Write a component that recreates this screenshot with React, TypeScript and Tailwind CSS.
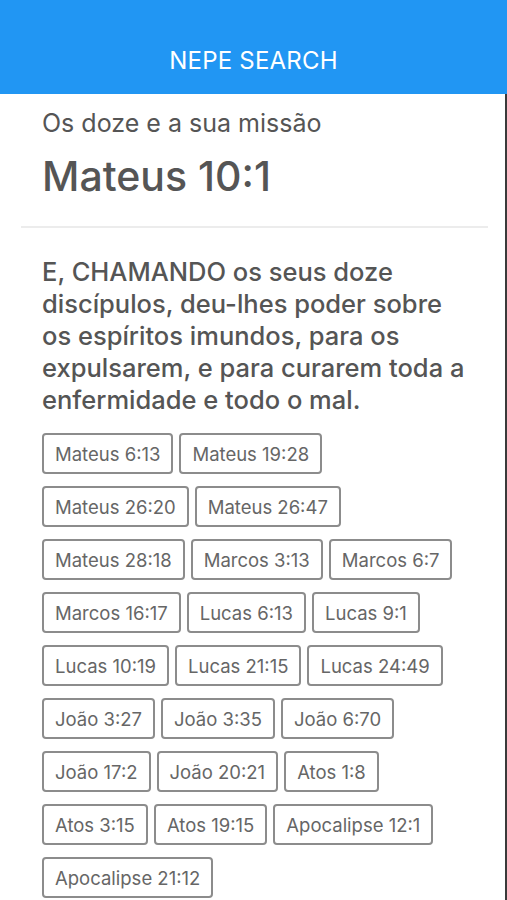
import React from "react";

const refs = [
  "Mateus 6:13",
  "Mateus 19:28",
  "Mateus 26:20",
  "Mateus 26:47",
  "Mateus 28:18",
  "Marcos 3:13",
  "Marcos 6:7",
  "Marcos 16:17",
  "Lucas 6:13",
  "Lucas 9:1",
  "Lucas 10:19",
  "Lucas 21:15",
  "Lucas 24:49",
  "João 3:27",
  "João 3:35",
  "João 6:70",
  "João 17:2",
  "João 20:21",
  "Atos 1:8",
  "Atos 3:15",
  "Atos 19:15",
  "Apocalipse 12:1",
  "Apocalipse 21:12",
];

export default function App() {
  return (
    <div className="w-[507px] h-[900px] overflow-hidden bg-white flex flex-col" style={{ fontFamily: "Inter, 'Liberation Sans', sans-serif" }}>
      <header className="h-[94px] shrink-0 bg-[#2196f3] flex items-end justify-center pb-[19px]">
        <h1 className="text-white text-[24px] leading-[28px] tracking-[0.2px]">NEPE SEARCH</h1>
      </header>
      <main className="flex-1 border-r-2 border-[#3a3a3a] pl-[21px] pr-[17px]">
        <div className="pl-[21px] pr-[23px] pt-[14px] pb-[26px]">
          <h2 className="text-[#555555] text-[25px] leading-[30px]">Os doze e a sua missão</h2>
          <h3 className="text-[#555555] text-[41px] leading-[48px] font-medium mt-[14px]">Mateus 10:1</h3>
        </div>
        <hr className="border-t-2 border-[#ececec]" />
        <div className="pl-[21px] pr-[23px] pt-[28px]">
          <p className="text-[#555555] text-[25.5px] leading-[32px] font-medium">
            E, CHAMANDO os seus doze discípulos, deu-lhes poder sobre os espíritos imundos, para os expulsarem, e para curarem toda a enfermidade e todo o mal.
          </p>
          <div className="flex flex-wrap gap-x-[6px] gap-y-[12px] mt-[17px]">
            {refs.map((r) => (
              <button
                key={r}
                className="h-[41px] px-[11px] border-2 border-[#8c8c8c] rounded-[4px] text-[#666666] text-[18.5px] leading-[24px] bg-white"
              >
                {r}
              </button>
            ))}
          </div>
        </div>
      </main>
    </div>
  );
}
